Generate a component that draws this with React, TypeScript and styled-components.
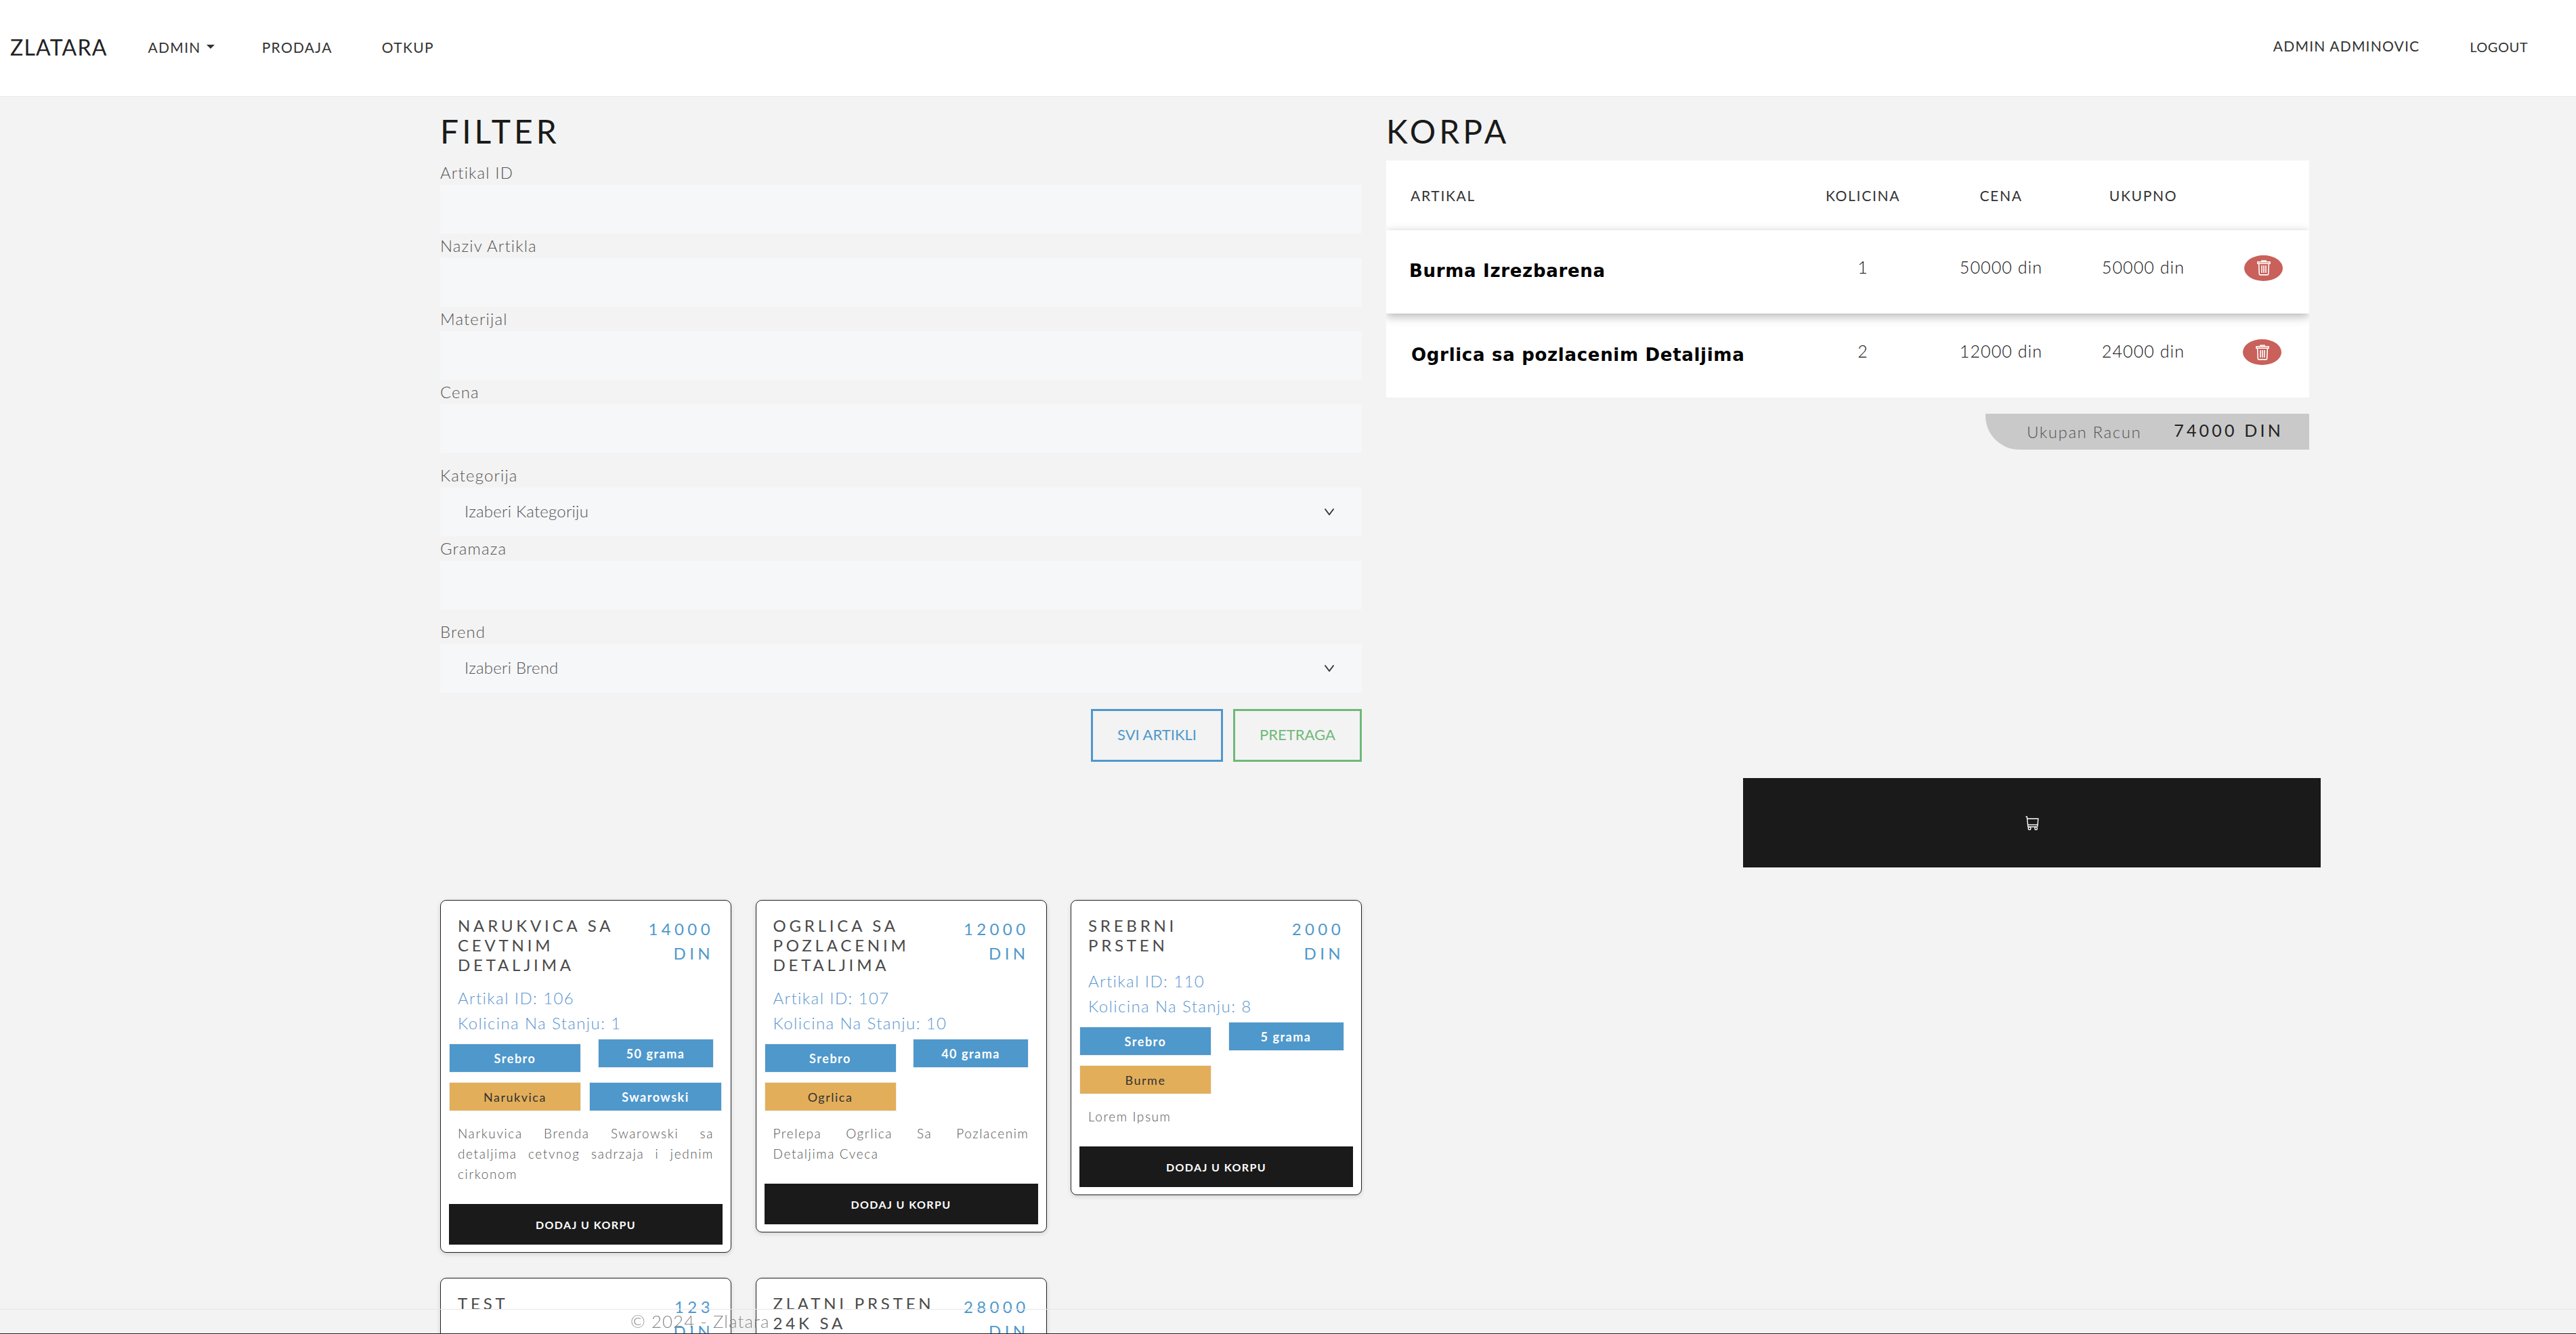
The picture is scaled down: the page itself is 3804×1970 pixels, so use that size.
import React from "react";
import styled, { createGlobalStyle } from "styled-components";

type Tag = { label: string; tone: "blue" | "gold" };
type Product = {
  title: string;
  price: string;
  id: number;
  stock: number;
  tags: Tag[];
  description: string;
};

const products: Product[] = [
  {
    title: "NARUKVICA SA CEVTNIM DETALJIMA",
    price: "14000 DIN",
    id: 106,
    stock: 1,
    tags: [
      { label: "Srebro", tone: "blue" },
      { label: "50 grama", tone: "blue" },
      { label: "Narukvica", tone: "gold" },
      { label: "Swarowski", tone: "blue" },
    ],
    description: "Narkuvica Brenda Swarowski sa detaljima cetvnog sadrzaja i jednim cirkonom",
  },
  {
    title: "OGRLICA SA POZLACENIM DETALJIMA",
    price: "12000 DIN",
    id: 107,
    stock: 10,
    tags: [
      { label: "Srebro", tone: "blue" },
      { label: "40 grama", tone: "blue" },
      { label: "Ogrlica", tone: "gold" },
    ],
    description: "Prelepa Ogrlica Sa Pozlacenim Detaljima Cveca",
  },
  {
    title: "SREBRNI PRSTEN",
    price: "2000 DIN",
    id: 110,
    stock: 8,
    tags: [
      { label: "Srebro", tone: "blue" },
      { label: "5 grama", tone: "blue" },
      { label: "Burme", tone: "gold" },
    ],
    description: "Lorem Ipsum",
  },
  {
    title: "TEST",
    price: "123 DIN",
    id: 111,
    stock: 1,
    tags: [{ label: "Srebro", tone: "blue" }],
    description: "Lorem Ipsum",
  },
  {
    title: "ZLATNI PRSTEN 24K SA",
    price: "28000 DIN",
    id: 112,
    stock: 3,
    tags: [{ label: "Zlato", tone: "gold" }],
    description: "Lorem Ipsum",
  },
];

const cartRows = [
  { name: "Burma Izrezbarena", qty: 1, price: "50000 din", total: "50000 din" },
  { name: "Ogrlica sa pozlacenim Detaljima", qty: 2, price: "12000 din", total: "24000 din" },
];

const TrashIcon = () => (
  <svg width="20" height="23" viewBox="0 0 20 23" fill="none" stroke="#fff" strokeWidth="1.6">
    <path d="M7 2.6V1h6v1.6" />
    <path d="M1 2.8h18v2.4H1z" />
    <path d="M2.6 5.2l.7 15.4a1.4 1.4 0 0 0 1.4 1.3h10.6a1.4 1.4 0 0 0 1.4-1.3l.7-15.4" />
    <path d="M7 8v11M10 8v11M13 8v11" />
  </svg>
);

const CartIcon = () => (
  <svg width="20" height="21" viewBox="0 0 20 21" fill="none" stroke="#fff" strokeWidth="1.4">
    <path d="M0.5 1h1.7l1.6 15h13" />
    <path d="M2.4 4h16.4l-1 12" />
    <path d="M3.4 13h14.6" />
    <ellipse cx="6" cy="18.4" rx="1.8" ry="2" />
    <ellipse cx="15.6" cy="18.4" rx="1.8" ry="2" />
  </svg>
);

const Chevron = () => (
  <svg width="16" height="12" viewBox="0 0 16 12" fill="none" stroke="#343a40" strokeWidth="2" strokeLinecap="round" strokeLinejoin="round">
    <path d="M2 2l6 8 6-8" />
  </svg>
);

export default function App() {
  return (
    <Page>
      <GlobalStyle />
      <NavBar>
        <NavLeft>
          <Brand>ZLATARA</Brand>
          <NavLink $gap={60}>
            ADMIN
            <Caret />
          </NavLink>
          <NavLink $gap={70}>PRODAJA</NavLink>
          <NavLink $gap={73}>OTKUP</NavLink>
        </NavLeft>
        <NavRight>
          <UserName>ADMIN ADMINOVIC</UserName>
          <LogoutLink $gap={74}>LOGOUT</LogoutLink>
        </NavRight>
      </NavBar>

      <Main>
        <LeftColumn>
          <Heading>FILTER</Heading>
          <FilterForm>
            <Label>Artikal ID</Label>
            <TextInput />
            <Label>Naziv Artikla</Label>
            <TextInput />
            <Label>Materijal</Label>
            <TextInput />
            <Label>Cena</Label>
            <TextInput />
            <Label $top={15}>Kategorija</Label>
            <SelectBox>
              <SelectText>Izaberi Kategoriju</SelectText>
              <Chevron />
            </SelectBox>
            <Label>Gramaza</Label>
            <TextInput />
            <Label $top={15}>Brend</Label>
            <SelectBox>
              <SelectText>Izaberi Brend</SelectText>
              <Chevron />
            </SelectBox>
            <FormActions>
              <OutlineButton type="button" $color="#4e98cc" $width={195}>
                SVI ARTIKLI
              </OutlineButton>
              <OutlineButton type="button" $color="#6fb978" $width={190}>
                PRETRAGA
              </OutlineButton>
            </FormActions>
          </FilterForm>

          <CardGrid>
            {products.map((p) => (
              <Card key={p.id}>
                <CardHeader>
                  <CardTitle>{p.title}</CardTitle>
                  <CardPrice>{p.price}</CardPrice>
                </CardHeader>
                <CardInfo>Artikal ID: {p.id}</CardInfo>
                <CardInfo>Kolicina Na Stanju: {p.stock}</CardInfo>
                <TagGrid>
                  {p.tags.map((t, i) => (
                    <TagChip key={t.label} $tone={t.tone} $raised={i === 1}>
                      {t.label}
                    </TagChip>
                  ))}
                </TagGrid>
                <CardText>{p.description}</CardText>
                <AddButton type="button">DODAJ U KORPU</AddButton>
              </Card>
            ))}
          </CardGrid>
        </LeftColumn>

        <RightColumn>
          <Heading>KORPA</Heading>
          <CartTable>
            <HeaderRow>
              <HeadCell $left>ARTIKAL</HeadCell>
              <HeadCell>KOLICINA</HeadCell>
              <HeadCell>CENA</HeadCell>
              <HeadCell>UKUPNO</HeadCell>
              <span />
            </HeaderRow>
            {cartRows.map((row, i) => (
              <CartRow key={row.name} $raised={i === 0} $height={i === 0 ? 123 : 124}>
                <ItemName $indent={i === 0 ? 34 : 37} $lift={i === 0 ? 4 : 2}>
                  {row.name}
                </ItemName>
                <ValueCell $lift={i === 0 ? 16 : 14}>{row.qty}</ValueCell>
                <ValueCell $lift={i === 0 ? 16 : 14}>{row.price}</ValueCell>
                <ValueCell $lift={i === 0 ? 16 : 14}>{row.total}</ValueCell>
                <ActionCell $lift={i === 0 ? 12 : 10} $shift={i === 0 ? 0 : 4}>
                  <DeleteButton type="button" aria-label="Obrisi">
                    <TrashIcon />
                  </DeleteButton>
                </ActionCell>
              </CartRow>
            ))}
          </CartTable>
          <TotalBox>
            <TotalLabel>Ukupan Racun</TotalLabel>
            <TotalValue>74000 DIN</TotalValue>
          </TotalBox>
          <CheckoutButton type="button" aria-label="Korpa">
            <CartIcon />
          </CheckoutButton>
        </RightColumn>
      </Main>

      <Footer>© 2024 - Zlatara</Footer>
    </Page>
  );
}

const GlobalStyle = createGlobalStyle`
  html, body {
    margin: 0;
    background: #f3f3f3;
  }
  * {
    box-sizing: border-box;
  }
  body {
    font-family: Lato, "Noto Sans", sans-serif;
    color: #333;
  }
`;

const Page = styled.div`
  height: 100vh;
  overflow: hidden;
`;

const NavBar = styled.nav`
  height: 143px;
  background: #fff;
  border-bottom: 1px solid #e8e8e8;
  display: flex;
  align-items: center;
  justify-content: space-between;
  padding: 0 71px 4px 15px;
`;

const NavLeft = styled.div`
  display: flex;
  align-items: center;
`;

const NavRight = styled.div`
  display: flex;
  align-items: center;
`;

const Brand = styled.a`
  font-size: 32px;
  letter-spacing: 1.2px;
  color: #222;
`;

const NavLink = styled.a<{ $gap: number }>`
  display: flex;
  align-items: center;
  margin-left: ${(p) => p.$gap}px;
  font-size: 21px;
  letter-spacing: 1.3px;
  color: #333;
`;

const LogoutLink = styled(NavLink)`
  font-size: 20px;
  letter-spacing: 0.5px;
`;

const Caret = styled.span`
  width: 0;
  height: 0;
  margin-left: 8px;
  border-left: 6px solid transparent;
  border-right: 6px solid transparent;
  border-top: 6px solid #333;
`;

const UserName = styled.span`
  font-size: 21px;
  letter-spacing: 1.2px;
  color: #333;
  margin-bottom: 4px;
`;

const Main = styled.main`
  display: grid;
  grid-template-columns: 1361px 1363px;
  column-gap: 36px;
  padding: 22px 0 0 650px;
  align-items: start;
`;

const LeftColumn = styled.section``;

const RightColumn = styled.section`
  display: flex;
  flex-direction: column;
`;

const Heading = styled.h2`
  margin: 0 0 14px;
  font-size: 48px;
  line-height: 58px;
  font-weight: 400;
  letter-spacing: 5px;
  color: #1a1a1a;
`;

const FilterForm = styled.form`
  display: flex;
  flex-direction: column;
`;

const Label = styled.label<{ $top?: number }>`
  margin-top: ${(p) => p.$top ?? 0}px;
  font-size: 24px;
  line-height: 36px;
  font-weight: 300;
  letter-spacing: 1.1px;
  color: #555;
`;

const TextInput = styled.input`
  height: 72px;
  width: 100%;
  border: 0;
  background: #f6f7f9;
`;

const SelectBox = styled.div`
  height: 72px;
  display: flex;
  align-items: center;
  justify-content: space-between;
  padding: 0 40px 0 36px;
  background: #f6f7f9;
`;

const SelectText = styled.span`
  padding-bottom: 3px;
  font-size: 24px;
  font-weight: 300;
  letter-spacing: 0.2px;
  color: #555;
`;

const FormActions = styled.div`
  display: flex;
  justify-content: flex-end;
  gap: 15px;
  margin-top: 24px;
`;

const OutlineButton = styled.button<{ $color: string; $width: number }>`
  width: ${(p) => p.$width}px;
  height: 78px;
  padding: 0 0 3px;
  border: 3px solid ${(p) => p.$color};
  background: transparent;
  color: ${(p) => p.$color};
  font-family: inherit;
  font-size: 22px;
  font-weight: 400;
`;

const CardGrid = styled.div`
  display: grid;
  grid-template-columns: repeat(3, 430px);
  column-gap: 35.5px;
  row-gap: 37px;
  align-items: start;
  margin-top: 204px;
`;

const Card = styled.article`
  display: flex;
  flex-direction: column;
  padding: 22px 12px 11px;
  background: #fff;
  border: 1px solid #222;
  border-radius: 9px;
  box-shadow: 0 2px 6px rgba(0, 0, 0, 0.14);
`;

const CardHeader = styled.header`
  display: flex;
  justify-content: space-between;
  align-items: flex-start;
  padding: 0 13px 0 13px;
  margin-bottom: 7px;
`;

const CardTitle = styled.h3`
  width: 255px;
  margin: 0;
  padding-bottom: 10px;
  font-size: 24px;
  line-height: 29px;
  font-weight: 400;
  letter-spacing: 4.8px;
  color: #4a4a4a;
`;

const CardPrice = styled.div`
  width: 105px;
  margin: 2px 0 -2px;
  font-size: 24px;
  line-height: 36px;
  letter-spacing: 5.4px;
  text-align: right;
  color: #4e98cc;
`;

const CardInfo = styled.div`
  padding: 0 13px;
  font-size: 24px;
  line-height: 36.5px;
  font-weight: 300;
  letter-spacing: 1.4px;
  color: #5b96cf;
`;

const TagGrid = styled.div`
  display: grid;
  grid-template-columns: 195px 196px;
  column-gap: 12px;
  row-gap: 14px;
  margin-top: 12px;
`;

const TagChip = styled.div<{ $tone: "blue" | "gold"; $raised: boolean }>`
  display: flex;
  align-items: center;
  justify-content: center;
  height: 43px;
  border: 1px solid #eee;
  background: ${(p) => (p.$tone === "blue" ? "#4e98cc" : "#e3ae5a")};
  color: ${(p) => (p.$tone === "blue" ? "#fff" : "#333")};
  font-size: 18px;
  font-weight: ${(p) => (p.$tone === "blue" ? 700 : 400)};
  letter-spacing: 1.5px;
  ${(p) =>
    p.$raised &&
    `
    width: 171px;
    justify-self: center;
    margin-top: -7px;
    margin-bottom: 7px;
  `}
`;

const CardText = styled.p`
  margin: 18px 13px 29px;
  font-size: 19px;
  line-height: 30px;
  font-weight: 300;
  letter-spacing: 1.6px;
  text-align: justify;
  color: #555;
`;

const AddButton = styled.button`
  height: 60px;
  border: 0;
  background: #1a1a1a;
  color: #fff;
  font-family: inherit;
  font-size: 16px;
  font-weight: 700;
  letter-spacing: 1.4px;
`;

const CartTable = styled.div`
  background: #fff;
  overflow: hidden;
`;

const rowColumns = "600px 208px 200px 220px 135px";

const HeaderRow = styled.div`
  display: grid;
  grid-template-columns: ${rowColumns};
  align-items: center;
  height: 103px;
`;

const HeadCell = styled.div<{ $left?: boolean }>`
  padding-left: ${(p) => (p.$left ? "36px" : "0")};
  text-align: ${(p) => (p.$left ? "left" : "center")};
  font-size: 21px;
  letter-spacing: 1.7px;
  color: #333;
`;

const CartRow = styled.div<{ $raised: boolean; $height: number }>`
  position: relative;
  display: grid;
  grid-template-columns: ${rowColumns};
  align-items: center;
  height: ${(p) => p.$height}px;
  background: #fff;
  ${(p) => p.$raised && "z-index: 1; box-shadow: 0 4px 14px rgba(0, 0, 0, 0.3);"}
`;

const ItemName = styled.div<{ $indent: number; $lift: number }>`
  padding: 0 0 ${(p) => p.$lift}px ${(p) => p.$indent}px;
  font-family: "Comic Sans MS", "DejaVu Sans", cursive;
  font-size: 26px;
  font-weight: 700;
  letter-spacing: 0.7px;
  color: #000;
  white-space: nowrap;
`;

const ValueCell = styled.div<{ $lift: number }>`
  padding-bottom: ${(p) => p.$lift}px;
  text-align: center;
  font-size: 25px;
  font-weight: 300;
  letter-spacing: 1.1px;
  color: #111;
`;

const ActionCell = styled.div<{ $lift: number; $shift: number }>`
  display: flex;
  justify-content: center;
  padding: 0 ${(p) => p.$shift}px ${(p) => p.$lift}px 0;
`;

const DeleteButton = styled.button`
  display: flex;
  align-items: center;
  justify-content: center;
  width: 57px;
  height: 38px;
  padding: 0;
  border: 0;
  border-radius: 50%;
  background: #c9605a;
`;

const TotalBox = styled.div`
  align-self: flex-end;
  display: flex;
  align-items: center;
  justify-content: space-between;
  width: 478px;
  height: 53px;
  margin-top: 24px;
  padding: 0 38px 0 61px;
  background: #c9c9c9;
  border-bottom-left-radius: 50px;
`;

const TotalLabel = styled.span`
  font-size: 24px;
  font-weight: 300;
  letter-spacing: 1.6px;
  color: #555;
`;

const TotalValue = styled.span`
  padding-bottom: 6px;
  font-size: 25px;
  letter-spacing: 4.2px;
  color: #222;
`;

const CheckoutButton = styled.button`
  align-self: flex-end;
  display: flex;
  align-items: center;
  justify-content: center;
  width: 853px;
  height: 132px;
  margin: 485px -17px 0 0;
  padding: 0;
  border: 0;
  background: #1a1a1a;
`;

const Footer = styled.footer`
  position: fixed;
  left: 0;
  right: 0;
  bottom: 0;
  height: 37px;
  padding-left: 931px;
  border-top: 1px solid #e4e6e8;
  border-bottom: 1px solid #222;
  font-size: 26px;
  line-height: 35px;
  font-weight: 300;
  letter-spacing: 1px;
  color: #888;
`;
